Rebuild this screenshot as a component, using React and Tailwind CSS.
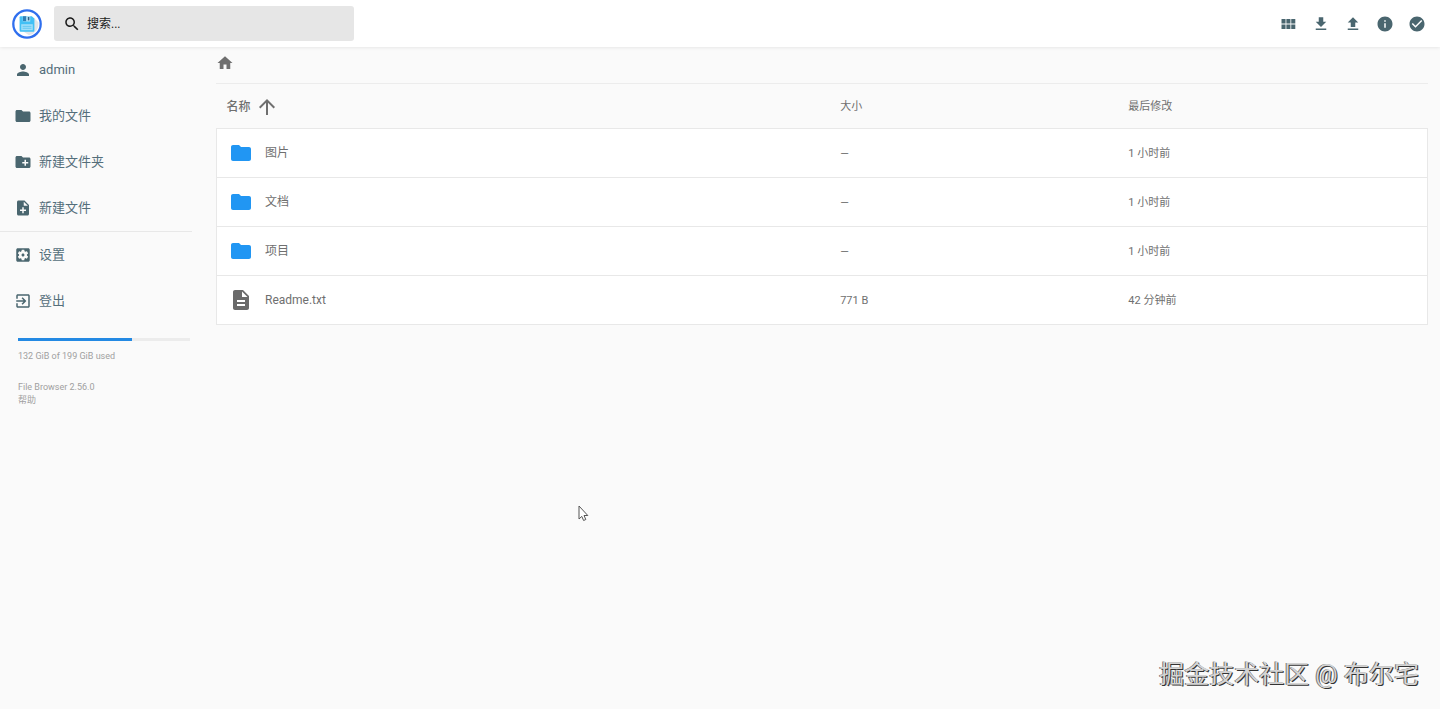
import React from "react";

const ICONS = {
  search:
    "M15.5 14h-.79l-.28-.27C15.41 12.59 16 11.11 16 9.5 16 5.91 13.09 3 9.5 3S3 5.91 3 9.5 5.91 16 9.5 16c1.61 0 3.09-.59 4.23-1.57l.27.28v.79l5 4.99L20.49 19l-4.99-5zm-6 0C7.01 14 5 11.99 5 9.5S7.01 5 9.5 5 14 7.01 14 9.5 11.99 14 9.5 14z",
  module:
    "M2 5.4h5.4v5.8H2zM8.5 5.4h5.4v5.8H8.5zM15 5.4h5.4v5.8H15zM2 12.8h5.4v5.8H2zM8.5 12.8h5.4v5.8H8.5zM15 12.8h5.4v5.8H15z",
  download: "M19 9h-4V3H9v6H5l7 7 7-7zM5 18v2h14v-2H5z",
  upload: "M9 16h6v-6h4l-7-7-7 7h4zm-4 2h14v2H5z",
  info: "M12 2C6.48 2 2 6.48 2 12s4.48 10 10 10 10-4.48 10-10S17.52 2 12 2zm1 15h-2v-6h2v6zm0-8h-2V7h2v2z",
  check:
    "M12 2C6.48 2 2 6.48 2 12s4.48 10 10 10 10-4.48 10-10S17.52 2 12 2zm-2 15l-5-5 1.41-1.41L10 14.17l7.59-7.59L19 8l-9 9z",
  person:
    "M12 12c2.21 0 4-1.79 4-4s-1.79-4-4-4-4 1.79-4 4 1.79 4 4 4zm0 2c-2.67 0-8 1.34-8 4v2h16v-2c0-2.66-5.33-4-8-4z",
  folder: "M10 4H4c-1.1 0-1.99.9-1.99 2L2 18c0 1.1.9 2 2 2h16c1.1 0 2-.9 2-2V8c0-1.1-.9-2-2-2h-8l-2-2z",
  newFolder:
    "M20 6h-8l-2-2H4c-1.11 0-1.99.89-1.99 2L2 18c0 1.11.89 2 2 2h16c1.11 0 2-.89 2-2V8c0-1.11-.89-2-2-2zm-1 8h-3v3h-2v-3h-3v-2h3V9h2v3h3v2z",
  newFile:
    "M14 2H6c-1.1 0-1.99.9-1.99 2L4 20c0 1.1.89 2 1.99 2H18c1.1 0 2-.9 2-2V8l-6-6zm2 14h-3v3h-2v-3H8v-2h3v-3h2v3h3v2zm-3-7V3.5L18.5 9H13z",
  settings:
    "M12 10c-1.1 0-2 .9-2 2s.9 2 2 2 2-.9 2-2-.9-2-2-2zm7-7H5c-1.11 0-2 .9-2 2v14c0 1.1.89 2 2 2h14c1.11 0 2-.9 2-2V5c0-1.1-.89-2-2-2zm-1.75 9c0 .23-.02.46-.05.68l1.48 1.16c.13.11.17.3.08.45l-1.4 2.42c-.09.15-.27.21-.43.15l-1.74-.7c-.36.28-.76.51-1.18.69l-.26 1.85c-.03.17-.18.3-.35.3h-2.8c-.17 0-.32-.13-.35-.29l-.26-1.85c-.43-.18-.82-.41-1.18-.69l-1.74.7c-.16.06-.34 0-.43-.15l-1.4-2.42c-.09-.15-.05-.34.08-.45l1.48-1.16c-.03-.23-.05-.46-.05-.69 0-.23.02-.46.05-.68l-1.48-1.16c-.13-.11-.17-.3-.08-.45l1.4-2.42c.09-.15.27-.21.43-.15l1.74.7c.36-.28.76-.51 1.18-.69l.26-1.85c.03-.17.18-.3.35-.3h2.8c.17 0 .32.13.35.29l.26 1.85c.43.18.82.41 1.18.69l1.74-.7c.16-.06.34 0 .43.15l1.4 2.42c.09.15.05.34-.08.45l-1.48 1.16c.03.23.05.46.05.69z",
  logout:
    "M10.09 15.59L11.5 17l5-5-5-5-1.41 1.41L12.67 11H3v2h9.67l-2.58 2.59zM19 3H5c-1.11 0-2 .9-2 2v4h2V5h14v14H5v-4H3v4c0 1.1.89 2 2 2h14c1.1 0 2-.9 2-2V5c0-1.1-.9-2-2-2z",
  home: "M10 20v-6h4v6h5v-8h3L12 3 2 12h3v8z",
  arrowUp: "M4 12l1.41 1.41L11 7.83V20h2V7.83l5.58 5.59L20 12l-8-8-8 8z",
  file: "M14 2H6c-1.1 0-1.99.9-1.99 2L4 20c0 1.1.89 2 1.99 2H18c1.1 0 2-.9 2-2V8l-6-6zm2 16H8v-2h8v2zm0-4H8v-2h8v2zm-3-5V3.5L18.5 9H13z",
};

function Icon({ name, className }) {
  return (
    <svg viewBox="0 0 24 24" fill="currentColor" aria-hidden="true" className={"shrink-0 " + className}>
      <path d={ICONS[name]} />
    </svg>
  );
}

function Logo() {
  return (
    <svg viewBox="0 0 30 30" className="size-[30px] shrink-0" role="img" aria-label="File Browser">
      <circle cx="15" cy="15" r="13.7" fill="#fff" stroke="#2f6fee" strokeWidth="2.3" />
      <path d="M22 9l4.6 4.6a12 12 0 0 1-9.6 12.6l-6-4z" fill="#e3e6e8" />
      <path d="M8.6 7.2h11.2l2.6 2.4v12.2a1 1 0 0 1-1 1H8.6a1 1 0 0 1-1-1V8.2a1 1 0 0 1 1-1z" fill="#42c0f5" />
      <path d="M10.8 7.2h7.4v5.2h-7.4z" fill="#b9e6fa" />
      <path d="M11 7.2h3.2v5H11z" fill="#2f7fb5" />
      <path d="M15.8 8h1.6v3.4h-1.6z" fill="#2b5f86" />
      <path d="M9.2 15.2h11.6v6H9.2z" fill="#9fdffa" />
      <path d="M10.6 17.4h8.8M10.6 19.3h8.8" stroke="#5cc3ee" strokeWidth=".8" />
    </svg>
  );
}

const ACTIONS = [
  ["module", "切换显示方式"],
  ["download", "下载"],
  ["upload", "上传"],
  ["info", "信息"],
  ["check", "多选"],
];

const MENU = [
  [
    ["person", "admin"],
    ["folder", "我的文件"],
  ],
  [
    ["newFolder", "新建文件夹"],
    ["newFile", "新建文件"],
  ],
  [
    ["settings", "设置"],
    ["logout", "登出"],
  ],
];

const FILES = [
  { name: "图片", size: "—", modified: "1 小时前", folder: true },
  { name: "文档", size: "—", modified: "1 小时前", folder: true },
  { name: "项目", size: "—", modified: "1 小时前", folder: true },
  { name: "Readme.txt", size: "771 B", modified: "42 分钟前", folder: false },
];

function Header() {
  return (
    <header className="relative z-10 flex h-[47px] items-center bg-white pr-[7px] pl-3 shadow-[0_0_4px_rgba(0,0,0,0.12)]">
      <Logo />
      <label className="ml-3 flex h-[35px] w-[300px] items-center gap-1.5 rounded-[3px] bg-[#e6e6e6] pl-[9px] text-[#1c1c1c]">
        <Icon name="search" className="size-[18px]" />
        <input
          type="text"
          aria-label="搜索"
          placeholder="搜索..."
          className="min-w-0 flex-1 bg-transparent text-[12px] outline-none placeholder:text-[#1c1c1c]"
        />
      </label>
      <div className="ml-auto flex">
        {ACTIONS.map(([icon, label]) => (
          <button key={icon} type="button" aria-label={label} className="flex size-8 items-center justify-center text-[#4a666f]">
            <Icon name={icon} className="size-[18px]" />
          </button>
        ))}
      </div>
    </header>
  );
}

function Sidebar() {
  return (
    <nav className="w-48 shrink-0">
      {MENU.map((group, i) => (
        <div key={i} className={i === 2 ? "border-t border-[#e8e8e8]" : ""}>
          {group.map(([icon, label]) => (
            <button
              key={label}
              type="button"
              className="flex h-[46px] w-full items-center gap-[7px] pl-[14px] text-left text-[13px] text-[#546e7a]"
            >
              <Icon name={icon} className="size-[18px] text-[#4a666f]" />
              {label}
            </button>
          ))}
        </div>
      ))}
      <div className="mt-3.5 pl-[18px] text-[9px] leading-[13px] text-[#a0a0a0]">
        <div className="mr-0.5 h-[3px] bg-[#ececec]">
          <div className="h-full w-[66%] bg-[#2389e3]" />
        </div>
        <p className="mt-[9px]">132 GiB of 199 GiB used</p>
        <p className="mt-[18px]">File Browser 2.56.0</p>
        <a href="#help" className="block">帮助</a>
      </div>
    </nav>
  );
}

function Listing() {
  return (
    <main className="min-w-0 flex-1 pr-3 pl-6">
      <div className="flex h-[37px] items-center border-b border-[#ececec] pb-1">
        <a href="#home" aria-label="主页" className="text-[#6f6f6f]">
          <Icon name="home" className="size-[18px]" />
        </a>
      </div>
      <table className="w-full table-fixed border-collapse text-left text-[11px] text-[#6f6f6f]">
        <colgroup>
          <col className="w-[51.5%]" />
          <col className="w-[23.8%]" />
          <col />
        </colgroup>
        <thead>
          <tr className="h-11">
            <th className="p-0 pt-0.5 pl-[10px] text-[12px] font-medium">
              <button type="button" className="flex items-center gap-1">
                名称
                <Icon name="arrowUp" className="size-6" />
              </button>
            </th>
            <th className="p-0 pt-0.5 font-normal">大小</th>
            <th className="p-0 pt-0.5 font-normal">最后修改</th>
          </tr>
        </thead>
        <tbody className="border border-[#e8e8e8] bg-white">
          {FILES.map((f) => (
            <tr key={f.name} className="h-[49px] border-b border-[#e8e8e8]">
              <td className="p-0 pl-3 text-[12px]">
                <div className="flex items-center gap-3">
                  <Icon
                    name={f.folder ? "folder" : "file"}
                    className={f.folder ? "size-6 text-[#2196f3]" : "size-6 text-[#6a6a6a]"}
                  />
                  {f.name}
                </div>
              </td>
              <td className="p-0 pt-[3px]">{f.size}</td>
              <td className="p-0 pt-[3px]">{f.modified}</td>
            </tr>
          ))}
        </tbody>
      </table>
    </main>
  );
}

export default function App() {
  return (
    <div className="relative min-h-screen overflow-hidden bg-[#fafafa] font-[Roboto,'Noto_Sans_CJK_SC',sans-serif]">
      <Header />
      <div className="flex">
        <Sidebar />
        <Listing />
      </div>
      <svg viewBox="0 0 12 18" className="absolute top-[505px] left-[578px] h-[18px] w-3" aria-hidden="true">
        <path d="M1 1v13l2.8-2.6L5.6 15.5l2.2-1-1.8-4h3.8z" fill="#fff" stroke="#555" strokeWidth="1" />
      </svg>
      <p className="absolute right-[21px] bottom-4 text-[25px] leading-9 text-[#d4d4d4] [text-shadow:1px_1px_0_#333,-1px_0_0_#777]">
        掘金技术社区 @ 布尔宅
      </p>
    </div>
  );
}
